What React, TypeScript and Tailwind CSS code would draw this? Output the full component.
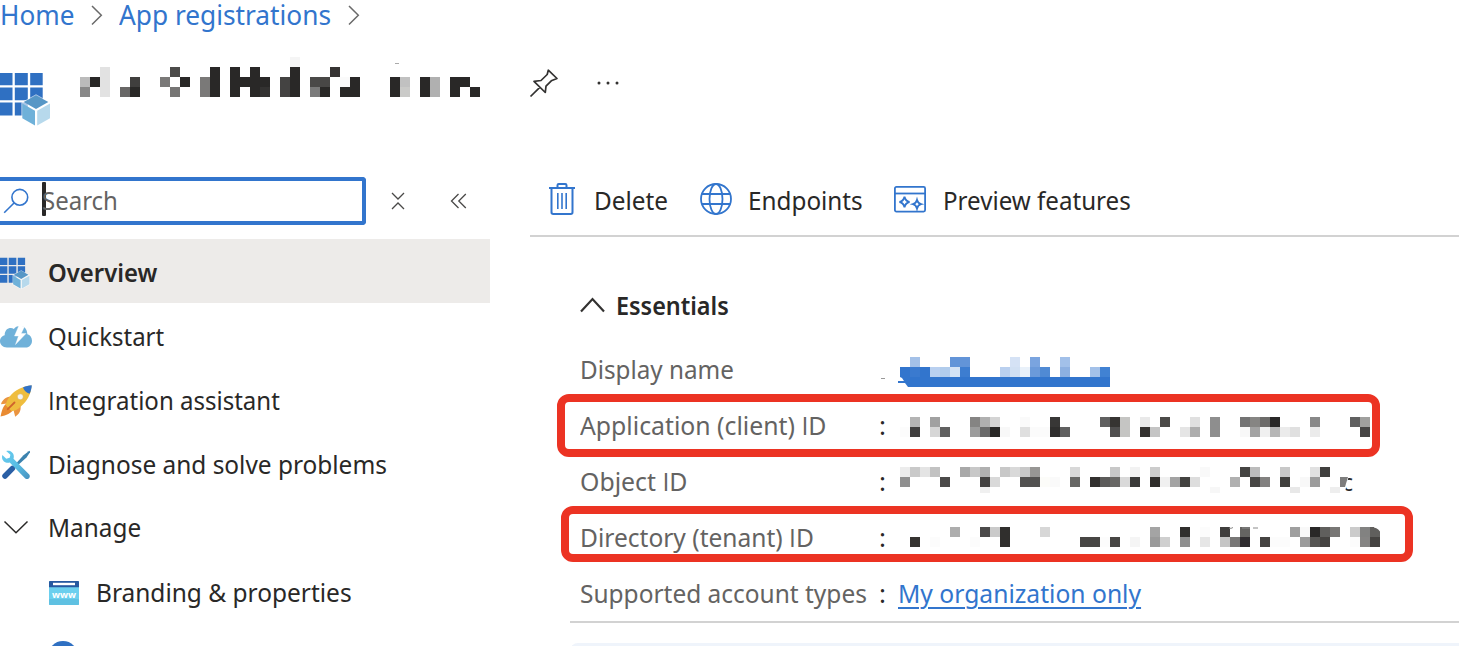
import React from "react";
import type { ReactNode } from "react";
import clsx from "clsx";

/* A pixelated strip: each entry is [top, height, "x:hex x:hex ..."], cells are 10px wide. */
type Strip = [number, number, string][];

const appNamePixels: Strip = [
  [57, 10, "290:f5f5f5"],
  [67, 10, "100:e2e2e2 170:4c4b4a 210:292827 230:292827 250:292827 290:292827 330:363433"],
  [77, 10, "80:bbbbbb 90:292827 100:e2e2e2 130:403f3e 160:7a7978 180:292827 200:7a7978 210:292827 230:292827 240:292827 250:292827 260:292827 280:444342 290:292827 310:4a4948 320:484746 340:fafafa 350:292827 390:292827 400:c1c1c1 420:292827 430:b0b0b0 450:292827 460:292827"],
  [87, 10, "80:888888 100:e2e2e2 120:686766 130:292827 170:767574 200:7a7978 210:292827 230:292827 250:292827 260:333231 280:444342 290:292827 310:7a7a7a 320:292827 340:292827 350:292827 390:292827 400:cacac8 420:292827 430:b0b0b0 450:292827 470:292827"],
];

const displayNamePixels: Strip = [
  [357, 10, "910:a4c1e8 950:6294d8 960:6294d8 1010:d5e2f5 1030:7aa4df 1060:a2c0e9"],
  [367, 10, "900:3275cd 910:3a7acf 920:3275cd 930:b9d0f0 940:b1ccec 950:d4e3f5 960:3d7dd0 1000:bad0ef 1010:d1e0f3 1020:e9f1fa 1030:6b9ada 1040:508ad4 1060:8db0e1 1090:a3c1e9 1100:4182d3"],
];

const clientIdPixels: Strip = [
  [417, 10, "910:b4b4b4 930:a1a1a1 970:858483 980:b0b0b0 990:d4d4d4 1020:fafafa 1050:383736 1100:606060 1110:363432 1120:c5c5c3 1140:e9e9e9 1160:4b4a48 1190:e0e0e0 1210:8e8e8e 1240:737373 1250:868583 1260:6c6b69 1270:292827 1310:888888 1350:606060 1360:a0a09e"],
  [427, 10, "900:fcfcfc 910:3f3e3e 930:d6d6d6 940:606060 970:9c9c9c 980:6a6a6a 990:292827 1000:f8f8f8 1020:dfdfdf 1030:fbfbfb 1040:fbfbfb 1050:2f2e2d 1060:606060 1110:504f4f 1120:c5c5c3 1140:33312f 1150:c4c4c4 1180:e5e5e5 1190:adadad 1210:8e8e8e 1240:f8f8f8 1250:a3a3a3 1260:f0f0f0 1270:b6b6b6 1280:ebebeb 1290:e0e0e0 1310:ebebeb 1360:464544"],
];

const objectIdPixels: Strip = [
  [467, 10, "900:ececec 910:c9c9c9 920:e4e4e4 930:c2c2c2 960:a8a8a8 970:c8c8c8 980:b0b0b0 1000:c8c8c8 1010:d9d9d9 1020:c8c8c8 1030:979694 1070:d8d8d8 1110:c8c8c8 1130:f2f2f2 1150:cccccc 1200:f9f9f9 1240:454442 1250:bcbcbc 1280:c8c8c8 1310:e1e1e1 1320:403f3e"],
  [477, 10, "900:8f8f8f 940:4b4a49 980:424140 990:d9d9d9 1020:525150 1030:525150 1040:fcfcf9 1050:fafafa 1070:666664 1090:32302f 1100:5c5b5a 1110:686765 1120:d9d9d9 1130:3a3a39 1150:2f2d2b 1160:f0f0f0 1170:a3a3a3 1180:434240 1190:dddddd 1230:b0b0b0 1250:474644 1260:828180 1280:403f3d 1300:f8f8f8 1310:9c9c9c"],
  [487, 6, "980:f0f0f0 1210:f7f7f7 1290:e8e8e8 1330:eeeeee"],
];

const tenantIdPixels: Strip = [
  [527, 10, "950:adadad 980:4b4a4a 990:cacaca 1000:302f2d 1040:d7d7d7 1150:a4a4a4 1180:302f2d 1200:fcfcfc 1220:403e3d 1240:656462 1290:9f9f9f 1300:f8f8f8 1310:292827 1320:605f5d 1330:787775 1350:cbcbcb 1360:828281 1370:605f5d"],
  [537, 10, "910:353331 930:fcfcfc 970:fcfcfc 1000:302f2d 1080:474644 1090:474644 1100:fcfcfc 1110:474644 1130:f5f5f5 1150:9a9a9a 1160:cfcfcf 1180:8f8f8f 1200:e6e6e6 1220:c5c5c5 1230:787776 1240:2f2c2f 1260:454341 1270:fcfcfc 1280:fcfcfc 1300:9b9b9b 1310:565553 1320:454341 1350:fcfcfc 1360:858483 1370:454341"],
];

function Pixels({ strips }: { strips: Strip }) {
  return (
    <g shapeRendering="crispEdges">
      {strips.flatMap(([y, h, row]) =>
        row.split(" ").map((cell) => {
          const [x, hex] = cell.split(":");
          return <rect key={`${x}-${y}`} x={x} y={y} width="10" height={h} fill={`#${hex}`} />;
        })
      )}
    </g>
  );
}

function Label({ children, className }: { children: ReactNode; className?: string }) {
  return <span className={clsx("inline-block origin-left whitespace-nowrap", className)}>{children}</span>;
}

/* Capital I without serifs */
const CapI = () => <span className="font-['Open_Sans']">I</span>;

function AppIcon({ className }: { className: string }) {
  return (
    <svg viewBox="0 0 51 54" className={clsx("shrink-0", className)}>
      <path fill="#2f70c2" d="M0 1h12.5v12.3H0zM14.8 1h13v12.3h-13zM30.2 1h12.5v12.3H30.2zM0 15.6h12.5v12.6H0zM14.8 15.6h13v12.6h-13zM30.2 15.6h12.5v12.6H30.2zM0 30.5h12.5v13H0zM14.8 30.5h13v13h-13z" />
      <path fill="#fff" d="M36 22.2 50.8 30.5v16.3L36 55 21.3 46.800V30.5z" opacity=".6" />
      <path fill="#5797c6" d="M36 23.200 48.300 30 36 37 23.700 30z" />
      <path fill="#6fb1d9" d="M22.300 31.500 35 38.800V53.500L22.300 46.200z" />
      <path fill="#b7d9ec" d="M50 31.500 37.200 38.800V53.500L50 46.200z" />
    </svg>
  );
}

function BreadcrumbChevron() {
  return (
    <svg viewBox="0 0 12 22" className="mt-0.5 h-[22px] w-3 shrink-0" fill="none" stroke="#6a6a6a" strokeWidth="1.5">
      <path d="M1 2l9.300 9.300L1 20.500" />
    </svg>
  );
}

function CloudIcon() {
  return (
    <svg viewBox="0 1 32 32" className="h-8 w-8">
      <path fill="#70b1d9" d="M7 27.500C2.500 27.500 0 24.500 0 21.300c0-3.200 2.300-5.600 4.700-6C4.500 10.500 7.500 8 10.800 8c1.200 0 2.200.3 3 .9C15.500 6.700 18 6 20.500 6c4 0 6.600 3.200 6.900 8.200 2.700.7 4.600 3.300 4.600 6.500 0 3.800-2.600 6.800-6.200 6.800z" />
      <path fill="#fff" stroke="#fff" strokeWidth=".4" d="M19 5.500 14.500 16h4L15.500 24.500 26 13.500h-4.800L24.500 6.500z" />
    </svg>
  );
}

function RocketIcon() {
  return (
    <svg viewBox="0 0 32 32" className="h-8 w-8">
      <path fill="#ea9440" d="M11 11.500C5.500 11.500 2 15.500 1 19.300l6.500-.8zM20.500 21c.8 5-1.800 8.500-5.300 10.700L13.500 25z" />
      <path fill="#e98b32" d="M6.500 18.500C3 21 2 25 .5 31.600c6-1.400 10.500-3 13-7z" />
      <path fill="#efbd3e" d="M31.600.4C23 1 15 4.500 9.500 11.700 7 15 5.800 18 6 20.500l5.500 5.500c3 0 6-1.300 9-4.300C27.500 16 31 9 31.600.4z" />
      <path fill="#3072c9" d="M31.800.3C28.500.5 25.700 1.200 23 2.400c1 3 3 5 6.600 6.400 1.300-2.800 2-5.500 2.200-8.500z" />
      <circle cx="20.300" cy="11.800" r="3" fill="#f4f4f4" stroke="#d9a93c" strokeWidth=".5" />
      <path d="M14.500 17.500 7.800 24.200" stroke="#d0642c" strokeWidth="1.800" strokeLinecap="round" />
    </svg>
  );
}

function ToolsIcon() {
  return (
    <svg viewBox="0 0 32 32" className="h-8 w-8">
      <defs>
        <linearGradient id="wrench" x1="0" y1="0" x2="1" y2="1">
          <stop offset="0" stopColor="#69cdf0" />
          <stop offset=".55" stopColor="#58bce3" />
          <stop offset="1" stopColor="#4790be" />
        </linearGradient>
      </defs>
      <path fill="#3b82ae" d="M29.800 1.800 30 3.300 26.500 8.500 17 17l-1.700-1.700 8.200-9 5.200-4z" />
      <path d="M5 27 12.500 19.300" stroke="#2a5fa5" strokeWidth="5.500" strokeLinecap="round" />
      <path fill="url(#wrench)" d="M6.200 2C9.500.9 13.500 3 13.800 7c.1 1-.1 2-.3 2.800L29 25.200c2.500 2.700-1.200 6.600-4 4L9.700 13.600c-3.700 1-7.400-1.500-7.700-5.200 0-.9.100-1.700.4-2.400L6.300 9.700l3.400-.9.700-3.100z" />
    </svg>
  );
}

function WwwIcon() {
  return (
    <svg viewBox="0 0 30 24" className="mt-0.5 h-6 w-[30px] shrink-0">
      <rect width="30" height="24" rx="1" fill="#6bcfee" />
      <rect y="18" width="30" height="6" rx="1" fill="#5fc1e2" />
      <path d="M0 6.200V1a1 1 0 0 1 1-1h28a1 1 0 0 1 1 1v5.200z" fill="#2659a0" />
      <rect x="4" y="1.800" width="22" height="2.400" fill="#fff" />
      <text x="15" y="16.800" textAnchor="middle" fontSize="9" fontWeight="700" fill="#fff" textLength="24" lengthAdjust="spacingAndGlyphs" className="font-['Open_Sans',sans-serif]">www</text>
    </svg>
  );
}

function NavItem({ icon, children, active }: { icon: ReactNode; children: ReactNode; active?: boolean }) {
  return (
    <li className={clsx("flex h-16 items-center pt-0.5", active && "bg-[#edebe9] font-semibold")}>
      <span className="flex w-12 shrink-0 items-center pt-0.5">{icon}</span>
      {children}
    </li>
  );
}

function Field({ label, value, colon = true, outline }: { label: ReactNode; value: ReactNode; colon?: boolean; outline?: ReactNode }) {
  return (
    <div className="relative flex h-14 items-center">
      <dt className="w-[299px] shrink-0 text-[#646362]">{label}</dt>
      <dd className="flex items-center">
        <span className="w-[19px]">{colon && ":"}</span>
        {value}
      </dd>
      {outline}
    </div>
  );
}

export default function App() {
  return (
    <div className="h-[646px] w-full overflow-hidden bg-white font-['Noto_Sans','Open_Sans',sans-serif] text-[26px] leading-8 text-[#292827]">
      <nav className="flex h-[57px] items-start text-[28px] leading-[28px] text-[#3275cd]">
        <div className="flex h-7 items-center">
          <span className="w-[91px]"><Label className="scale-x-[.935]">Home</Label></span>
          <BreadcrumbChevron />
          <span className="ml-4 w-[229px]"><Label className="scale-x-[.938]">App registrations</Label></span>
          <BreadcrumbChevron />
        </div>
      </nav>

      <header className="flex h-[120px] items-start">
        <AppIcon className="mt-[15px] h-[54px] w-[51px]" />
        <svg viewBox="51 57 449 50" className="h-[50px] w-[449px]">
          <Pixels strips={appNamePixels} />
          <path d="M395 63.500h4" stroke="#aaa" />
        </svg>
        <svg viewBox="0 0 30 30" className="ml-[29px] mt-3 h-[30px] w-[30px]" fill="none" stroke="#333231" strokeWidth="1.700" strokeLinejoin="round">
          <path d="M19.300 1.200 28 9.500 22.300 11.800 17 17.200 16.300 23.500 5 12.300 12 11.500 18.200 5.500zM10.800 18.300 1.500 27.500" />
        </svg>
        <svg viewBox="0 0 26 6" className="ml-9 mt-[23px] h-1.5 w-[26px]" fill="#333231">
          <circle cx="4" cy="3" r="1.500" /><circle cx="13" cy="3" r="1.500" /><circle cx="22" cy="3" r="1.500" />
        </svg>
      </header>

      <div className="flex">
        <aside className="w-[490px] shrink-0">
          <div className="flex h-12 items-center">
            <div className="flex h-12 w-[366px] items-center rounded-r-[4px] border-y-4 border-r-4 border-[#3275cd] text-[#646362]">
              <svg viewBox="0 0 32 32" className="mt-0.5 h-8 w-8" fill="none" stroke="#3275cd" strokeWidth="1.600">
                <circle cx="19.800" cy="11.300" r="7.900" /><path d="M14 17 4.200 26.700" />
              </svg>
              <span className="-mt-1 ml-2.5 h-[34px] w-1 rounded-[1px] bg-[#292827]" />
              <span className="-ml-1 -mt-0.5"><Label className="scale-x-[.922]">Search</Label></span>
            </div>
            <svg viewBox="0 0 14 18" className="ml-[25px] h-[18px] w-3.5" fill="none" stroke="#4a4948" strokeWidth="1.300">
              <path d="M1 1l6 6 6-6M1 17l6-6 6 6" />
            </svg>
            <svg viewBox="0 0 17 16" className="ml-[45px] h-4 w-[17px]" fill="none" stroke="#4a4948" strokeWidth="1.300">
              <path d="M8.500 1l-7 7 7 7M15.800 1l-7 7 7 7" />
            </svg>
          </div>
          <ul className="mt-3.5">
            <NavItem active icon={<AppIcon className="h-8 w-[30px]" />}><Label className="scale-x-[.918]">Overview</Label></NavItem>
            <NavItem icon={<CloudIcon />}><Label className="scale-x-[.922]">Quickstart</Label></NavItem>
            <NavItem icon={<RocketIcon />}><Label className="scale-x-[.924]"><CapI />ntegration assistant</Label></NavItem>
            <NavItem icon={<ToolsIcon />}><Label className="scale-x-[.939]">Diagnose and solve problems</Label></NavItem>
            <NavItem icon={
              <svg viewBox="0 0 32 16" className="-mt-1 h-4 w-8" fill="none" stroke="#292827" strokeWidth="1.500"><path d="M4.500 2.500 16 13.800 27.500 2.500" /></svg>
            }><Label className="-mt-0.5 scale-x-[.936]">Manage</Label></NavItem>
            <li className="flex h-16 items-center pl-[49px] pt-0.5">
              <WwwIcon />
              <span className="ml-[17px]"><Label className="scale-x-[.941]">Branding &amp; properties</Label></span>
            </li>
            <li className="h-6 pl-12 pt-[18px]"><div className="h-[30px] w-[30px] rounded-full bg-[#2f70c2]" /></li>
          </ul>
        </aside>

        <main className="ml-10 grow">
          <div className="flex h-[60px] items-center border-b-2 border-[#d2d2d2] pb-3.5">
            <svg viewBox="0 0 26 32" className="ml-[19px] h-8 w-[26px] shrink-0" fill="none" stroke="#3275cd" strokeWidth="2">
              <path d="M0 5h26M8.500 5V2.200q0-1.200 1.200-1.200h6.600q1.200 0 1.200 1.200V5M2.500 5v24.300q0 1.700 1.700 1.700h17.600q1.700 0 1.700-1.700V5" />
              <path d="M8.800 10v16M13 10v16M17.200 10v16" strokeWidth="1.600" />
            </svg>
            <span className="ml-[19px] mt-0.5 w-[106px] shrink-0"><Label className="scale-x-[.936]">Delete</Label></span>
            <svg viewBox="0 0 32 32" className="h-8 w-8 shrink-0" fill="none" stroke="#3275cd" strokeWidth="1.800">
              <circle cx="16" cy="16" r="15" /><ellipse cx="16" cy="16" rx="6.500" ry="15" /><path d="M2 11h28M2 21h28" />
            </svg>
            <span className="ml-4 mt-0.5 w-[146px] shrink-0"><Label className="scale-x-[.934]">Endpoints</Label></span>
            <svg viewBox="0 0 32 28" className="h-7 w-8 shrink-0" fill="none" stroke="#3275cd" strokeWidth="1.800">
              <rect x=".9" y="1.900" width="30.200" height="24.700" rx="1.500" />
              <path d="M1 8.500h30" />
              <path d="M10.500 11.800q1 4.300 5 5.200-4 .9-5 5.200-1-4.300-5-5.200 4-.9 5-5.200zM23 15q.9 3.300 4 4.200-3.100.9-4 4.200-.9-3.300-4-4.200 3.100-.9 4-4.200z" strokeWidth="1.900" />
            </svg>
            <span className="ml-[16.500px] mt-0.5 shrink-0"><Label className="scale-x-[.928]">Preview features</Label></span>
          </div>

          <section className="pl-10 pt-[31px]">
            <h2 className="flex h-[73px] items-center pl-2.5 font-semibold">
              <svg viewBox="0 0 26 18" className="h-[18px] w-[26px]" fill="none" stroke="#333231" strokeWidth="2.200"><path d="M1 15.500 12.500 3 24 15.500" /></svg>
              <span className="ml-2.5"><Label className="scale-x-[.9]">Essentials</Label></span>
            </h2>
            <dl className="pl-2.5">
              <Field
                label={<Label className="scale-x-[.932]">Display name</Label>}
                colon={false}
                value={
                  <svg viewBox="898 341 500 56" className="h-14 w-[500px] overflow-visible">
                    <Pixels strips={displayNamePixels} />
                    <path fill="#3275cd" d="M900 377h210v10H908l-3-4h-7v-2h6l-2-3z" />
                    <path d="M881 378.500h4" stroke="#999" />
                  </svg>
                }
              />
              <Field
                label={<Label className="scale-x-[.954]">Application (client) <CapI />D</Label>}
                value={<svg viewBox="898 397 500 56" className="h-14 w-[500px]"><Pixels strips={clientIdPixels} /></svg>}
                outline={<div className="absolute -left-[23px] -top-[3px] h-[62.500px] w-[823px] rounded-xl border-8 border-[#ec3323]" />}
              />
              <Field
                label={<Label className="scale-x-[.955]">Object <CapI />D</Label>}
                value={
                  <svg viewBox="898 453 500 56" className="h-14 w-[500px]">
                    <text x="1342" y="490.500" fontSize="23" fill="#292827">c</text>
                    <path fill="#fff" d="M1338 475h11l-4 17h-7z" />
                    <Pixels strips={objectIdPixels} />
                    <path fill="#7d7d7d" d="M1340 477h8l-3 10h-5z" />
                  </svg>
                }
              />
              <Field
                label={<Label className="scale-x-[.944]">Directory (tenant) <CapI />D</Label>}
                value={
                  <svg viewBox="898 509 500 56" className="h-14 w-[500px]">
                    <Pixels strips={tenantIdPixels} />
                    <path d="M1229 528q2 1 4-.5M1242 528h8M1253 528h5" stroke="#8a8a8a" fill="none" />
                    <path fill="#fff" d="M1374 526.500h7v7q-2-5-7-6z" />
                  </svg>
                }
                outline={<div className="absolute -left-[19px] -top-[3.500px] h-14 w-[852px] rounded-xl border-8 border-[#ec3323]" />}
              />
              <Field
                label={<Label className="scale-x-[.941]">Supported account types</Label>}
                value={<a className="text-[#3275cd]"><Label className="scale-x-[.948] underline decoration-2 underline-offset-4">My organization only</Label></a>}
              />
            </dl>
            <div className="h-0.5 bg-[#d2d2d2]" />
            <div className="mt-5 h-10 rounded-tl-lg bg-[#eff4fb]" />
          </section>
        </main>
      </div>
    </div>
  );
}
